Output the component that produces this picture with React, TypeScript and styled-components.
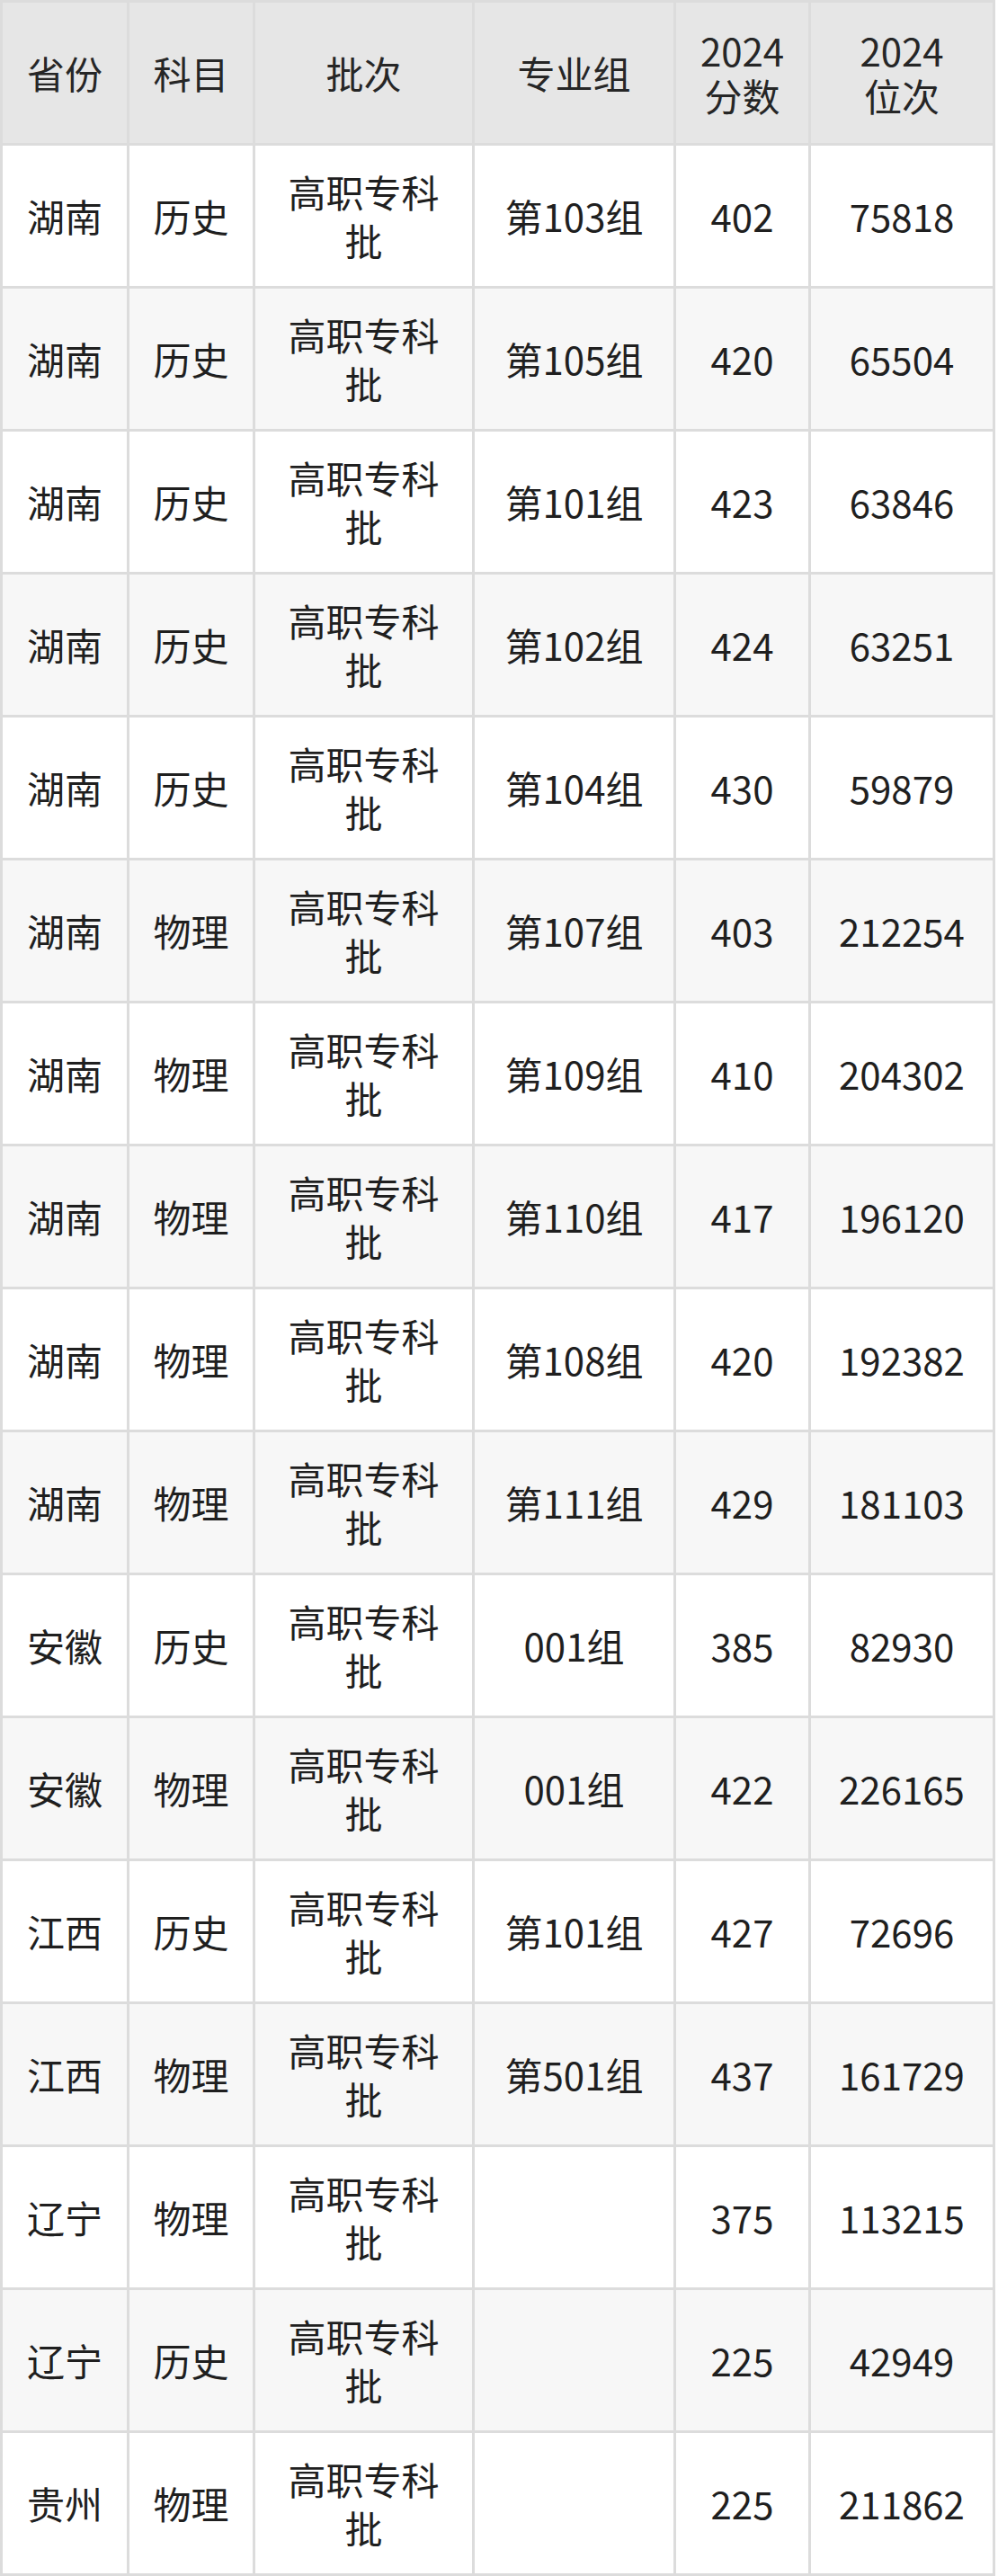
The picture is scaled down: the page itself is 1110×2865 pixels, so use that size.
import React from 'react';
import styled, { createGlobalStyle } from 'styled-components';

const GlobalStyle = createGlobalStyle`
  html, body {
    margin: 0;
    padding: 0;
    background: #ffffff;
  }
`;

const Table = styled.table`
  border-collapse: separate;
  border-spacing: 3px;
  background-color: #dcdcdc;
  font-family: "Noto Sans CJK SC", "Noto Sans", sans-serif;
  color: #1f1f1f;
  font-size: 42px;
  line-height: 54px;
  table-layout: fixed;
`;

const HeadCell = styled.th<{ $w: number }>`
  width: ${(p) => p.$w}px;
  height: 156px;
  box-sizing: border-box;
  padding: 0 16px;
  background-color: #e6e6e6;
  font-weight: normal;
  line-height: 50px;
  white-space: pre-line;
  color: #262626;
  text-align: center;
  vertical-align: middle;
`;

const Row = styled.tr<{ $striped: boolean }>`
  td {
    background-color: ${(p) => (p.$striped ? '#f7f7f7' : '#ffffff')};
  }
`;

const Cell = styled.td`
  height: 156px;
  box-sizing: border-box;
  padding: 0 24px;
  text-align: center;
  vertical-align: middle;
`;

const columns = [
  { title: '省份', width: 138 },
  { title: '科目', width: 137 },
  { title: '批次', width: 241 },
  { title: '专业组', width: 221 },
  { title: '2024\n分数', width: 147 },
  { title: '2024\n位次', width: 202 }
];

const rows = [
  ['湖南', '历史', '第103组', '402', '75818'],
  ['湖南', '历史', '第105组', '420', '65504'],
  ['湖南', '历史', '第101组', '423', '63846'],
  ['湖南', '历史', '第102组', '424', '63251'],
  ['湖南', '历史', '第104组', '430', '59879'],
  ['湖南', '物理', '第107组', '403', '212254'],
  ['湖南', '物理', '第109组', '410', '204302'],
  ['湖南', '物理', '第110组', '417', '196120'],
  ['湖南', '物理', '第108组', '420', '192382'],
  ['湖南', '物理', '第111组', '429', '181103'],
  ['安徽', '历史', '001组', '385', '82930'],
  ['安徽', '物理', '001组', '422', '226165'],
  ['江西', '历史', '第101组', '427', '72696'],
  ['江西', '物理', '第501组', '437', '161729'],
  ['辽宁', '物理', '', '375', '113215'],
  ['辽宁', '历史', '', '225', '42949'],
  ['贵州', '物理', '', '225', '211862']
];

const App = () => {
  return (
    <>
      <GlobalStyle />
      <Table>
        <thead>
          <tr>
            {columns.map((col) => (
              <HeadCell $w={col.width} key={col.title}>
                {col.title}
              </HeadCell>
            ))}
          </tr>
        </thead>
        <tbody>
          {rows.map((r, idx) => (
            <Row $striped={idx % 2 === 1} key={idx}>
              <Cell>{r[0]}</Cell>
              <Cell>{r[1]}</Cell>
              <Cell>高职专科批</Cell>
              <Cell>{r[2]}</Cell>
              <Cell>{r[3]}</Cell>
              <Cell>{r[4]}</Cell>
            </Row>
          ))}
        </tbody>
      </Table>
    </>
  );
};

export default App;
